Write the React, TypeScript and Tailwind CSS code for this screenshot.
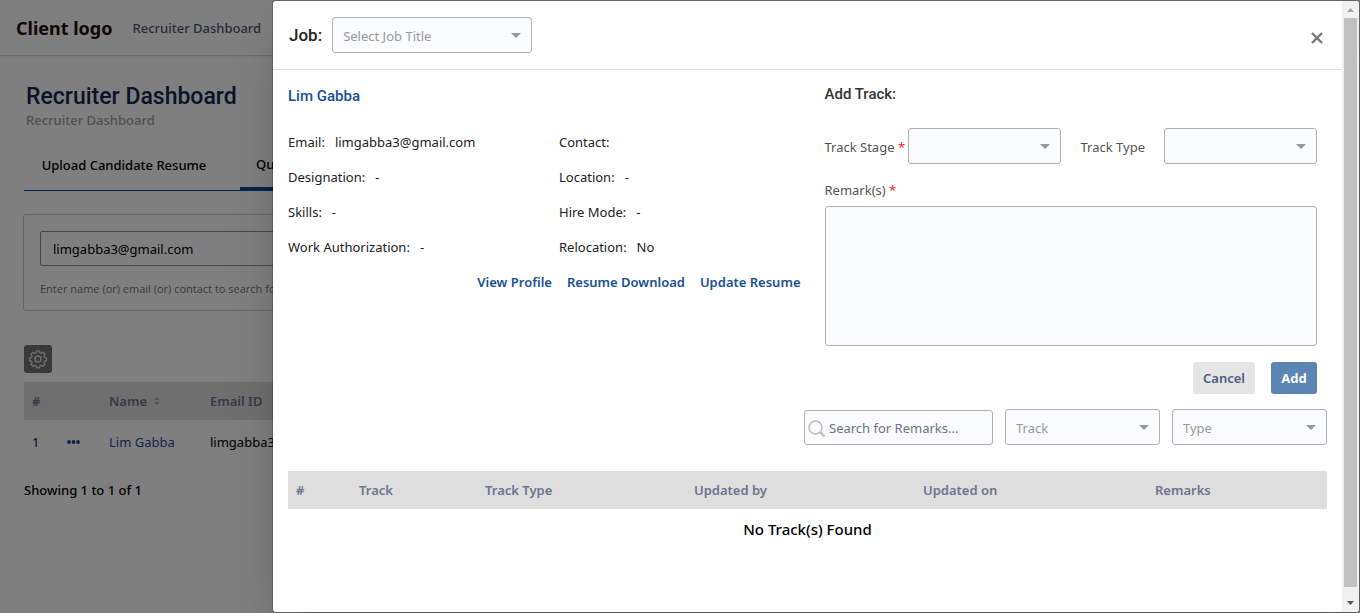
import type { ReactNode } from "react";

const sans = "font-['Noto_Sans','Open_Sans',sans-serif]";
const roboto = "font-['Roboto',sans-serif]";

function Dropdown({ id, label, placeholder, className }: { id: string; label?: string; placeholder?: string; className: string }) {
  return (
    <span className={`relative inline-flex h-9 ${className}`}>
      <select
        id={id}
        aria-label={label}
        defaultValue=""
        className="h-full w-full appearance-none rounded-[3px] border border-[#aeb0b4] bg-[#fafbfd] pt-0.5 pr-7 pl-2.5 text-[13px] text-[#999]"
      >
        <option value="">{placeholder ?? ""}</option>
      </select>
      <svg className="pointer-events-none absolute top-4 right-[11px]" width="10" height="5" viewBox="0 0 10 5" aria-hidden="true">
        <path d="M0 0h10L5 5z" fill="#999" />
      </svg>
    </span>
  );
}

function Detail({ label, children }: { label: string; children?: ReactNode }) {
  return (
    <div className="flex h-[35px] items-center gap-2.5 text-[#222]">
      <dt>{label}:</dt>
      <dd>{children}</dd>
    </div>
  );
}

function Star() {
  return <span className="text-[#ff2235]">*</span>;
}

function Dashboard() {
  return (
    <div className="min-h-screen bg-white">
      <header className="flex h-14 items-center gap-5 border-b border-[#d2d2e0] px-4 shadow-xs">
        <span className="text-[18px] font-bold whitespace-nowrap text-[#2a0c0c]">Client logo</span>
        <a href="#" className="font-medium whitespace-nowrap text-[#4b5878]">Recruiter Dashboard</a>
      </header>
      <main className="px-6 pt-[25px]">
        <div className="px-0.5">
          <h1 className={`${roboto} text-[23px] leading-[31px] font-medium text-[#132950]`}>Recruiter Dashboard</h1>
          <p className="leading-4 font-medium text-[#a0a0a0]">Recruiter Dashboard</p>
        </div>
        <nav className="mt-3 flex h-[51px] border-b border-[#004a99] font-medium text-black">
          <a href="#" className="flex w-54 items-center justify-center pr-4">Upload Candidate Resume</a>
          <a href="#" className="flex items-center border-b-3 border-[#004a99] px-4">Quick</a>
        </nav>
        <section className="mt-[23px] -ml-px rounded-[3px] border border-[#c8c8c8] p-4 pb-3">
          <input aria-label="Search candidate" defaultValue="limgabba3@gmail.com" className="h-[35px] w-full rounded-[2px] border border-[#8c8c8c] px-3 text-black" />
          <p className="mt-3.5 font-['Open_Sans',sans-serif] text-[11px] leading-[18px] text-[#777]">Enter name (or) email (or) contact to search for</p>
        </section>
        <button aria-label="Settings" className="mt-[34px] flex size-7 items-center justify-center rounded-[3px] bg-[#737373] text-[#ddd]">
          <svg width="20" height="20" viewBox="0 0 20 20" fill="none" stroke="currentColor" strokeWidth="1.500" strokeLinejoin="round" aria-hidden="true">
            <circle cx="10" cy="10" r="3" />
            <path d="M8.500 1.800h3l.6 2.100 1.400.6 1.900-1.100 2.100 2.100-1.100 1.900.6 1.400 2.100.6v3l-2.100.6-.6 1.400 1.100 1.900-2.100 2.100-1.900-1.100-1.400.6-.6 2.100h-3l-.6-2.100-1.400-.6-1.900 1.100-2.100-2.100 1.100-1.900-.6-1.400-2.100-.6v-3l2.100-.6.6-1.400-1.100-1.900 2.100-2.100 1.900 1.100 1.400-.6z" transform="translate(.7 .2) scale(.93)" />
          </svg>
        </button>
        <table className="mt-[9px] w-full table-fixed text-left">
          <colgroup>
            <col className="w-[35px]" />
            <col className="w-[42px]" />
            <col className="w-[101px]" />
            <col />
          </colgroup>
          <thead>
            <tr className="h-[38px] bg-[#dedede] text-[#6a7590]">
              <th className="pl-2 font-semibold">#</th>
              <th />
              <th className="pl-2 font-semibold">
                <span className="flex items-center gap-[7px]">
                  Name
                  <svg width="6" height="8" viewBox="0 0 6 8" fill="#aaa" aria-hidden="true">
                    <path d="M3 0l3 3H0zM3 8L0 5h6z" />
                  </svg>
                </span>
              </th>
              <th className="pl-2 font-semibold">Email ID</th>
            </tr>
          </thead>
          <tbody>
            <tr className="h-11 text-[#1b4f93]">
              <td className="pl-2 text-[#2a0066]">1</td>
              <td className="pl-2">
                <svg width="13" height="4" viewBox="0 0 13 4" fill="currentColor" aria-hidden="true">
                  <circle cx="2" cy="2" r="1.900" />
                  <circle cx="6.500" cy="2" r="1.900" />
                  <circle cx="11" cy="2" r="1.900" />
                </svg>
              </td>
              <td className="pl-2"><a href="#">Lim Gabba</a></td>
              <td className="pl-2 text-black">limgabba3@gmail.com</td>
            </tr>
          </tbody>
        </table>
        <p className="mt-4 leading-5 font-medium text-black">Showing 1 to 1 of 1</p>
      </main>
    </div>
  );
}

function TrackDialog() {
  return (
    <div role="dialog" aria-label="Job tracks" className="flex w-4/5 overflow-hidden rounded-[4px] border border-black/20 bg-white bg-clip-padding shadow-2xl">
      <div className="min-w-0 flex-1">
        <header className="flex items-center border-b border-[#dedfe1] p-4 pr-[19px]">
          <label htmlFor="job" className={`${roboto} mr-2.5 text-[17px] font-medium text-[#222]`}>Job:</label>
          <Dropdown id="job" placeholder="Select Job Title" className="w-50" />
          <button aria-label="Close" className="ml-auto pt-1.5 text-[#777]">
            <svg width="12" height="12" viewBox="0 0 12 12" fill="none" stroke="currentColor" strokeWidth="2.400" aria-hidden="true">
              <path d="M1 1l10 10M11 1L1 11" />
            </svg>
          </button>
        </header>
        <div className="px-[15px] pt-3.5">
          <div className="grid grid-cols-2">
            <section>
              <h2 className={`${roboto} text-[15px] leading-6 font-medium text-[#1b4f93]`}>Lim Gabba</h2>
              <dl className="mt-4 grid grid-cols-[271px_1fr]">
                <Detail label="Email">limgabba3@gmail.com</Detail>
                <Detail label="Contact" />
                <Detail label="Designation">-</Detail>
                <Detail label="Location">-</Detail>
                <Detail label="Skills">-</Detail>
                <Detail label="Hire Mode">-</Detail>
                <Detail label="Work Authorization">-</Detail>
                <Detail label="Relocation">No</Detail>
              </dl>
              <div className="flex h-[35px] items-center justify-end gap-[15px] pr-[7px] font-semibold text-[#1b4f93]">
                <a href="#">View Profile</a>
                <a href="#">Resume Download</a>
                <a href="#">Update Resume</a>
              </div>
            </section>
            <form className="pr-2.5 pl-[17px] text-[#555]">
              <h2 className={`${roboto} text-[15px] leading-5 font-medium text-[#333]`}>Add Track:</h2>
              <div className="mt-6 flex items-center">
                <label htmlFor="stage" className="flex-1 pt-0.5 whitespace-nowrap">Track Stage <Star /></label>
                <Dropdown id="stage" className="w-[153px]" />
                <label htmlFor="type" className="mr-[19px] ml-5 pt-0.5 whitespace-nowrap">Track Type</label>
                <Dropdown id="type" className="w-[153px]" />
              </div>
              <label htmlFor="remarks" className="mt-4 block leading-5">Remark(s) <Star /></label>
              <textarea id="remarks" className="mt-1.5 block h-35 w-full resize-none rounded-[3px] border border-[#aeb0b4] bg-[#fafbfd] p-2" />
              <div className="mt-4 flex justify-end gap-4 font-semibold">
                <button type="button" className="h-8 w-[62px] rounded-[3px] bg-[#e5e5e5] text-[#4a5f7f]">Cancel</button>
                <button type="button" className="h-8 w-[46px] rounded-[3px] bg-[#5b85b5] font-bold text-white">Add</button>
              </div>
            </form>
          </div>
          <div className="mt-[15px] flex items-end justify-end gap-3">
            <span className="relative inline-flex">
              <svg className="absolute top-2.5 left-1 z-10" width="18" height="18" viewBox="0 0 18 18" fill="none" stroke="#bbb" strokeWidth="1.400" aria-hidden="true">
                <circle cx="7.500" cy="7.500" r="6.500" />
                <path d="M12 12l4.500 4.500" strokeWidth="2" />
              </svg>
              <input aria-label="Search for Remarks" placeholder="Search for Remarks..." className="h-[35px] w-[189px] rounded-[3px] border border-[#aeb0b4] bg-[#fafbfd] pr-2 pl-6 placeholder:text-[#6c757d]" />
            </span>
            <Dropdown id="filter-track" label="Track" placeholder="Track" className="w-[155px]" />
            <Dropdown id="filter-type" label="Type" placeholder="Type" className="w-[155px]" />
          </div>
          <table className="mt-[26px] w-full table-fixed text-left">
            <thead>
              <tr className="h-[38px] bg-[#dedede] text-[#6a7590]">
                <th className="w-[63px] pl-2 font-semibold">#</th>
                <th className="w-[126px] pl-2 font-semibold">Track</th>
                <th className="w-[209px] pl-2 font-semibold">Track Type</th>
                <th className="w-[229px] pl-2 font-semibold">Updated by</th>
                <th className="w-[232px] pl-2 font-semibold">Updated on</th>
                <th className="pl-2 font-semibold">Remarks</th>
              </tr>
            </thead>
            <tbody>
              <tr>
                <td colSpan={6} className="h-10 text-center text-[15px] font-medium text-black">No Track(s) Found</td>
              </tr>
            </tbody>
          </table>
        </div>
      </div>
      <div aria-hidden="true" className="flex w-[17px] flex-col items-center bg-[#f1f1f1]">
        <span className="flex h-[17px] shrink-0 items-center">
          <svg width="7" height="4" viewBox="0 0 7 4"><path d="M3.500 0L7 4H0z" fill="#a3a3a3" /></svg>
        </span>
        <span className="w-[13px] flex-1 bg-[#c1c1c1]" />
        <span className="flex h-[25px] shrink-0 items-end pb-[7px]">
          <svg width="7" height="4" viewBox="0 0 7 4"><path d="M0 0h7L3.500 4z" fill="#505050" /></svg>
        </span>
      </div>
    </div>
  );
}

export default function App() {
  return (
    <div className={`${sans} relative text-[13px] leading-5`}>
      <Dashboard />
      <div className="absolute inset-0 flex justify-end bg-black/50">
        <TrackDialog />
      </div>
    </div>
  );
}
